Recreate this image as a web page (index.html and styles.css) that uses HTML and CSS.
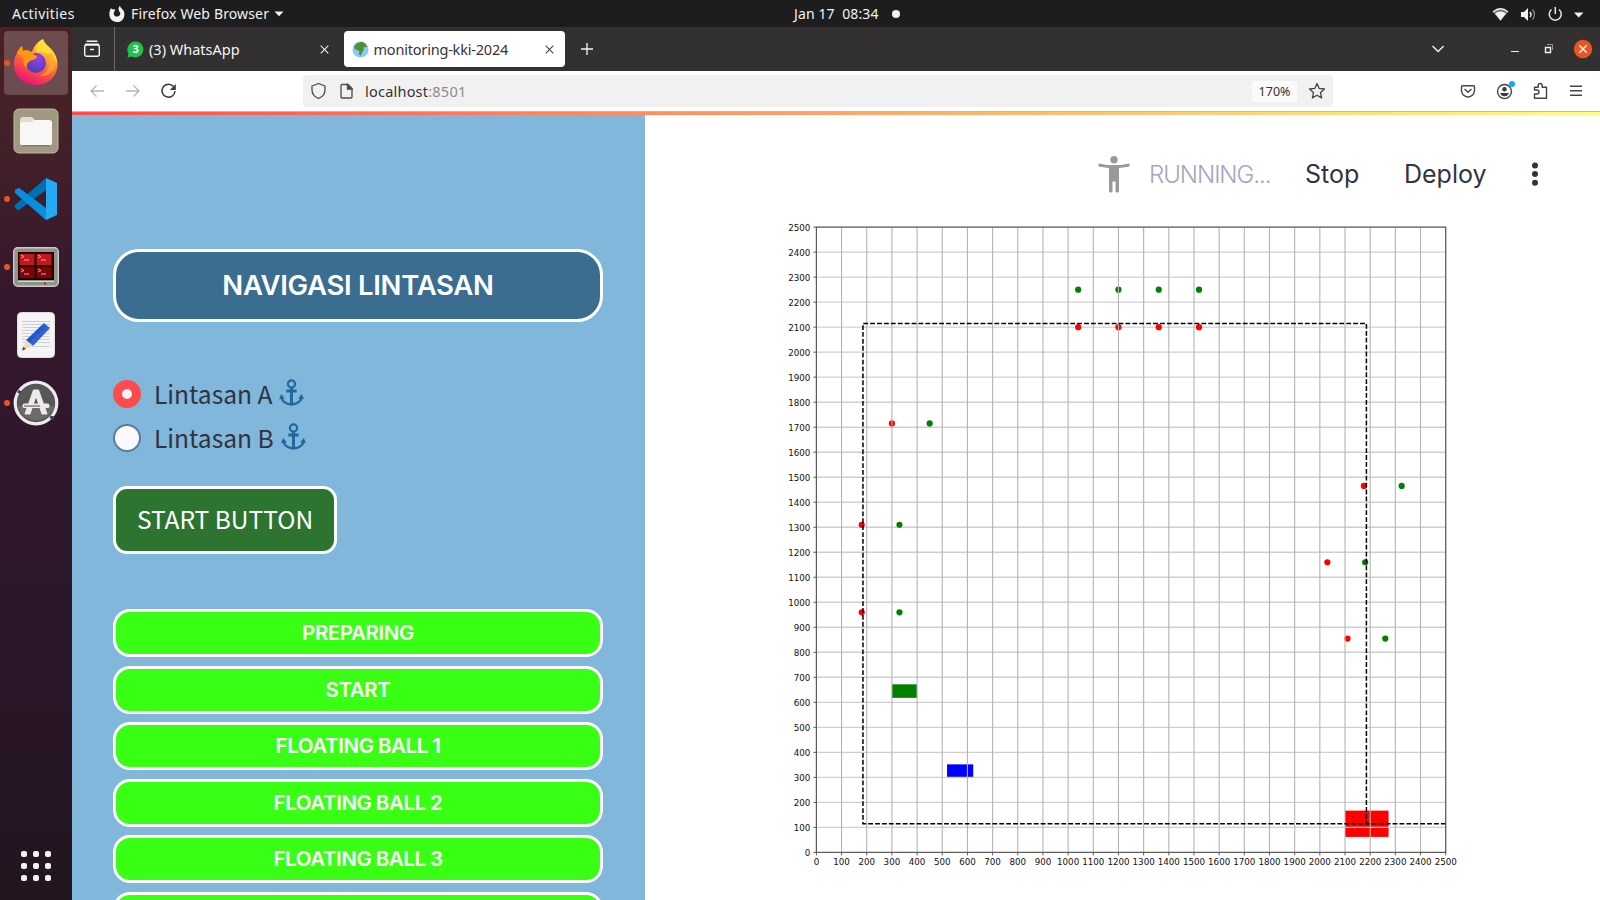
FILE: index.html
```html
<!DOCTYPE html>
<html lang="en">
<head>
<meta charset="utf-8">
<title>monitoring-kki-2024</title>
<link rel="stylesheet" href="styles.css">
</head>
<body>
<header class="topbar">
  <span class="activities">Activities</span>
  <svg class="top-fox" width="18" height="18" viewBox="0 0 18 18"><path d="M3 3.2 5 4.6 7.2 4.2 6.6 6.2C5.6 7.2 5.4 9 6.4 10.4 7.8 12 10.4 12 11.7 10.3 12.7 8.8 12.3 7.4 11.2 6.2 10 4.6 10.4 2.2 12 .8 12.2 2.8 14.2 3.6 15.4 5.6 17.6 9.4 16.2 14.6 12.4 16.4 8.6 18 4 16.6 2.2 13 .8 10 1.2 6 3 3.2Z" fill="#f2f2f2"/></svg>
  <span class="appname">Firefox Web Browser</span>
  <svg class="top-caret" width="10" height="6" viewBox="0 0 10 6"><path d="M.5.5h9L5 5.2z" fill="#f2f2f2"/></svg>
  <span class="clock">Jan 17&nbsp; 08:34</span>
  <span class="clock-dot"></span>
  <svg class="status" width="100" height="20" viewBox="0 0 100 20" fill="none">
    <path d="M1 8Q8.500 1.500 16 8L8.500 17Z" fill="#777"/><path d="M1 8Q8.500 1.500 16 8" stroke="#f2f2f2" stroke-width="1.300"/><path d="M3 9.500Q8.500 5.500 14 9.500L8.500 16.500Z" fill="#f2f2f2"/>
    <path d="M29 8h3l4-4v13l-4-4h-3z" fill="#f2f2f2"/><path d="M38 8q2 2.500 0 5" stroke="#f2f2f2" stroke-width="1.400"/><path d="M40.500 5.500q4 5 0 10" stroke="#888" stroke-width="1.300"/>
    <path d="M59.500 5.500a6 6 0 1 0 7.500 0M63.300 3v7" stroke="#e8e8e8" stroke-width="1.500"/>
    <path d="M82 8.500h9.500l-4.800 5z" fill="#f2f2f2"/>
  </svg>
</header>
<div class="desktop">
  <nav class="dock">
    <div class="app active running">
      <svg width="46" height="48" viewBox="0 0 46 48">
        <defs>
          <linearGradient id="ff" x1=".8" y1="0" x2=".35" y2="1"><stop offset="0" stop-color="#fff44f"/><stop offset=".3" stop-color="#ffb52b"/><stop offset=".62" stop-color="#ff5a3c"/><stop offset="1" stop-color="#e8127a"/></linearGradient>
          <radialGradient id="fp" cx=".6" cy=".3" r=".7"><stop offset="0" stop-color="#9a3fe8"/><stop offset="1" stop-color="#4b3fb8"/></radialGradient>
        </defs>
        <path d="M30 1c1 4 4 6 8 10 3 3 5 7 6 11 3 13-7 25-21 25C10 47 1 38 1 26c0-6 2-9 3-11 1-3 3-5 5-7l1 5c4-1 7 0 9 1 2-6 6-11 11-13Z" fill="url(#ff)"/>
        <path d="M30 1c1 4 4 6 8 10 4 4 6 9 6 14-3-6-7-8-12-10-4-1-6-1-9-1 1-6 4-11 7-13Z" fill="#ffe23f" opacity=".75"/>
        <circle cx="23" cy="25" r="10" fill="url(#fp)"/>
        <path d="M4 15c1-3 3-5 5-7l1 5c5-2 9 1 11 4 2 0 3 1 3 2-1 3-7 3-8 5-2 1-3 4-2 6-4-2-4-7-3-9-2-3-5-5-7-6Z" fill="#ff980e"/>
        <path d="M33 16c6 7 4 17-6 22 12 1 19-10 12-23Z" fill="#ffad2c" opacity=".7"/>
      </svg>
    </div>
    <div class="app">
      <svg width="46" height="46" viewBox="0 0 46 46"><rect x="1" y="1" width="44" height="44" rx="5" fill="#a19882" stroke="#c0b9a6"/><path d="M7 12q0-3 3-3h9l3 3h13q4 0 4 4v8H7z" fill="#e0dccf"/><path d="M7 17q0-3 3-3h8l3-2h15q3 0 3 3v19.500q0 3-3 3H10q-3 0-3-3z" fill="#f8f7f5"/><path d="M9 37.700h28" stroke="#6e6657" stroke-width="1"/></svg>
    </div>
    <div class="app running">
      <svg width="44" height="44" viewBox="0 0 44 44"><path d="M1 28 32 1v12L5 33q-2 0-4-2z" fill="#0070b4"/><path d="M1 16v-3l4-2 27 20v12z" fill="#0389d8"/><path d="M1 15q0-3 4-4l29 22-2 10z" fill="#078fdc"/><path d="M32 1 43 6v32l-11 5z" fill="#25a9f3"/></svg>
    </div>
    <div class="app running">
      <svg width="46" height="40" viewBox="0 0 46 40"><rect x=".7" y=".7" width="44.600" height="38.600" rx="4" fill="#8f938b" stroke="#c9ccc5" stroke-width="1.400"/><rect x="5" y="5" width="36" height="28" fill="#250000"/><path d="M6.500 7h15v11h-15zM23.500 7h15v11h-15z" fill="#c2181c"/><path d="M6.500 20h15v11h-15zM23.500 20h15v11h-15z" fill="#7d0407"/><path d="m8 8 3 1.500L8 11m3 2h5M25 8l3 1.500L25 11m3 2h5M8 22l3 1.500L8 25m3 2h5m9-5 3 1.500-3 1.500m3 2h5" stroke="#e9b5b5" stroke-width=".9" fill="none"/><path d="M31 36.500h2" stroke="#e11" stroke-width="2"/><path d="M5 34.500h36" stroke="#d5d7d1"/></svg>
    </div>
    <div class="app">
      <svg width="38" height="46" viewBox="0 0 38 46"><rect x=".5" y=".5" width="37" height="45" rx="4" fill="#f4f4f4" stroke="#ddd"/><path d="M5 9.500h28M5 12.500h28M5 15.500h28M5 18.500h28M5 21.500h28M5 24.500h28M5 27.500h28M5 30.500h28M5 34.500h28" stroke="#cfcfcf"/><path d="m27 11 6 5-17 18-7-6z" fill="#2f63d8"/><path d="m24.500 13.500 3 2.600-17 16.500-1-4z" fill="#1f49b0" opacity=".5"/><path d="m9 28 7 6-10 4z" fill="#f3d9b5"/><path d="m6.500 35 2.300 2L5 38.500z" fill="#333"/></svg>
    </div>
    <div class="app running">
      <svg width="46" height="46" viewBox="0 0 46 46"><circle cx="23" cy="23" r="20.800" fill="#585858" stroke="#ececec" stroke-width="3.200"/><path d="M5 26h36a18.500 18.500 0 0 1-36 0z" fill="#6b6b6b"/><path d="m5 11 3 2M37 37l4 1" stroke="#444" stroke-width="3"/><path d="M20.500 10h5l8.500 24h-5l-6-18-6 18h-5z" fill="#ececec" stroke="#ececec" stroke-linejoin="round"/><rect x="9.500" y="23.500" width="27" height="4.600" rx="2.200" fill="#ececec"/><path d="M11 26h16" stroke="#7c2b69"/></svg>
    </div>
    <div class="launcher"><i></i><i></i><i></i><i></i><i></i><i></i><i></i><i></i><i></i></div>
  </nav>
  <div class="window">
    <div class="tabs">
      <div class="view-btn"><svg width="18" height="18" viewBox="0 0 18 18" fill="none" stroke="#f5f5f5" stroke-width="1.400"><path d="M4 1.300h10M2.500 4.200h13" stroke-linecap="round"/><rect x="1.700" y="5" width="14.600" height="11.300" rx="2"/><path d="M7 9.500h4"/></svg></div>
      <div class="tab">
        <svg width="17" height="17" viewBox="0 0 17 17"><path d="M8.500.5a8 8 0 1 1-4 15L.5 16.500l1-4A8 8 0 0 1 8.500.5z" fill="#22c04c"/><text x="8.600" y="12.400" text-anchor="middle" class="badge-num">3</text></svg>
        <span class="tab-title t1">(3) WhatsApp</span>
        <svg class="x" width="9" height="9" viewBox="0 0 9 9"><path d="m.7.700 7.600 7.600m0-7.600L.7 8.300" stroke="#eee" stroke-width="1.100"/></svg>
      </div>
      <div class="tab current">
        <svg width="17" height="17" viewBox="0 0 17 17"><circle cx="8.500" cy="8.500" r="8" fill="#8dc9f3"/><path d="M3 4q3-3 7-3.200l3 1.700 2 3-1.500 1-2-.5.500 2.500-2 3-1.500 3.500L7 13l.3-3L4 8.500 2 7z" fill="#4f9033"/></svg>
        <span class="tab-title t2">monitoring-kki-2024</span>
        <svg class="x" width="9" height="9" viewBox="0 0 9 9"><path d="m.7.700 7.600 7.600m0-7.600L.7 8.300" stroke="#444" stroke-width="1.100"/></svg>
      </div>
      <svg class="plus" width="12" height="12" viewBox="0 0 12 12"><path d="M6 0v12M0 6h12" stroke="#f5f5f5" stroke-width="1.300"/></svg>
      <svg class="win-ctl" width="180" height="20" viewBox="0 0 180 20" fill="none" stroke="#f0f0f0"><path d="m12.500 7 5.600 5.500L23.700 7" stroke-width="1.400"/><path d="M91 12.500h8"/><path d="M125.500 8.500h5v5h-5z" stroke-width="1.400"/><path d="M127 5.500h5.500V11" stroke="#999"/><circle cx="163" cy="10" r="9.200" fill="#e95420" stroke="none"/><path d="m159.300 6.300 7.400 7.400m0-7.400-7.400 7.400" stroke-width="1.500"/></svg>
    </div>
    <div class="toolbar">
      <svg class="nav-icons" width="90" height="20" viewBox="0 0 90 20" fill="none" stroke="#b5b5b5" stroke-width="1.300"><path d="M15 10H2m5.500-5.500L2 10l5.500 5.500M37 10h13m-5.500-5.500L50 10l-5.500 5.500"/><path d="M84.500 5.500A6.500 6.500 0 1 0 86 10" stroke="#3a3a3a" stroke-width="1.500"/><path d="M86.800 3v6h-6z" fill="#3a3a3a" stroke="none"/></svg>
      <div class="urlbar">
        <svg width="42" height="18" viewBox="0 0 42 18" fill="none" stroke="#4a4a4a" stroke-width="1.300"><path d="M7.500 1.500 14 4v4c0 4-3 7-6.500 8.500C4 15 1 12 1 8V4z" stroke-linejoin="round"/><path d="M31 2.500h6l4 4V15a1 1 0 0 1-1 1h-9a1 1 0 0 1-1-1V3.500a1 1 0 0 1 1-1z"/><path d="M36.500 2.500v4.500H41z" fill="#4a4a4a"/></svg>
        <span class="url">localhost<em>:8501</em></span>
        <span class="zoom">170%</span>
        <svg width="18" height="18" viewBox="0 0 18 18" fill="none" stroke="#444" stroke-width="1.300" stroke-linejoin="round"><path d="m9 1.500 2.200 4.900 5.300.6-4 3.600 1.100 5.300L9 13.300l-4.600 2.600 1.100-5.300-4-3.600 5.300-.6z"/></svg>
      </div>
      <svg class="tools" width="124" height="22" viewBox="0 0 124 22" fill="none" stroke="#444" stroke-width="1.400"><path d="M2.500 5.800h11q1 0 1 1v3.700a6.500 6.500 0 0 1-13 0V6.800q0-1 1-1z"/><path d="m4.500 9 3.500 3.300L11.500 9" /><circle cx="44.500" cy="11.500" r="7"/><circle cx="44.500" cy="9.300" r="2.200" fill="#3a3a3a" stroke="none"/><path d="M40.200 13h8.600q-.8 3.300-4.300 3.300T40.200 13z" fill="#3a3a3a" stroke="none"/><circle cx="52" cy="4" r="3" fill="#00b3f4" stroke="none"/><path d="M74.500 18.300V14h2.500a2 2 0 0 0 0-4h-2.500V7.300h3.700V5.500a2 2 0 0 1 4 0v1.800h4.300v11z" stroke-linejoin="round"/><path d="M110 6.300h12M110 10.800h12M110 15.300h12"/></svg>
    </div>
    <div class="accent"></div>
    <div class="page">
      <aside class="sidebar">
        <h1 class="nav-title"><span>NAVIGASI LINTASAN</span></h1>
        <div class="radios">
          <label class="radio"><i class="dot on"></i><span class="ra">Lintasan A</span><svg width="25" height="28" viewBox="0 0 25 28"><use href="#anchor"/></svg></label>
          <label class="radio"><i class="dot"></i><span class="rb">Lintasan B</span><svg width="25" height="28" viewBox="0 0 25 28"><g id="anchor" fill="none" stroke="#22679f"><circle cx="12.500" cy="5" r="3.600" stroke-width="2.200"/><path d="M12.500 8.500v18M7.300 12h10.400" stroke-width="3"/><path d="M2.500 18.500c1.500 9 18.500 9 20 0" stroke-width="2.400"/><path d="m2.200 15 3.600 4.500L0 20.300zM22.800 15l2.200 5.300-5.800-.8z" fill="#22679f" stroke="none"/></g></svg></label>
        </div>
        <button class="start"><span>START BUTTON</span></button>
        <div class="steps">
          <div class="step"><span>PREPARING</span></div>
          <div class="step"><span>START</span></div>
          <div class="step"><span>FLOATING BALL 1</span></div>
          <div class="step"><span>FLOATING BALL 2</span></div>
          <div class="step"><span>FLOATING BALL 3</span></div>
          <div class="step"></div>
        </div>
      </aside>
      <main class="content">
        <div class="app-head">
          <svg class="man" width="32" height="37" viewBox="0 0 32 37" fill="#999"><circle cx="16" cy="3.700" r="3.700"/><path d="M1 7.500q-1.500 1.800.5 3.200L11 12v23.500q0 1 1.700 1t1.800-1V25.500h3V35.500q0 1 1.800 1t1.700-1V12l9.500-1.300q2-1.400.5-3.200L23 9H9z"/></svg>
          <span class="running-txt">RUNNING...</span>
          <span class="stop">Stop</span>
          <span class="deploy">Deploy</span>
          <svg class="dots" width="8" height="24" viewBox="0 0 8 24" fill="#31333f"><circle cx="4" cy="3.500" r="3"/><circle cx="4" cy="12" r="3"/><circle cx="4" cy="20.700" r="3"/></svg>
        </div>
        <svg id="chart" class="chart" width="955" height="685" viewBox="645 215 955 685"></svg>
      </main>
    </div>
  </div>
</div>
<script src="chart.js"></script>
</body>
</html>
```

FILE: chart.js
```js
const svg = document.getElementById('chart');
const X = v => 816.4 + v * 629.3 / 2500;
const Y = v => 852.4 - v * 625.3 / 2500;
function add(tag, attrs, text) {
  const el = document.createElementNS('http://www.w3.org/2000/svg', tag);
  for (const k in attrs) el.setAttribute(k, attrs[k]);
  if (text !== undefined) el.textContent = text;
  svg.appendChild(el);
}
function rect(x0, y0, x1, y1, fill) {
  add('rect', { x: X(x0), y: Y(y1), width: X(x1) - X(x0), height: Y(y0) - Y(y1), fill });
}
rect(300, 618, 400, 672, '#008000');
rect(519, 300, 623, 352, '#0000ff');
rect(2100, 62, 2273, 167, '#ff0000');

for (let v = 0; v <= 2500; v += 100) {
  add('line', { x1: X(0), x2: X(2500), y1: Y(v), y2: Y(v), class: 'grid row' });
}

const red = [[1040, 2100], [1200, 2100], [1360, 2100], [1520, 2100], [300, 1715], [180, 1310], [180, 960], [2175, 1465], [2030, 1160], [2110, 855]];
const green = [[1040, 2250], [1200, 2250], [1360, 2250], [1520, 2250], [450, 1715], [330, 1310], [330, 960], [2325, 1465], [2180, 1160], [2260, 855]];
red.forEach(([x, y]) => add('circle', { cx: X(x), cy: Y(y), r: 3.1, fill: '#ff0000' }));
green.forEach(([x, y]) => add('circle', { cx: X(x), cy: Y(y), r: 3.1, fill: '#008000' }));

for (let v = 0; v <= 2500; v += 100) {
  add('line', { x1: X(v), x2: X(v), y1: Y(0), y2: Y(2500), class: 'grid' });
  add('line', { x1: X(v), x2: X(v), y1: Y(0), y2: Y(0) + 3, class: 'tick' });
  add('line', { x1: X(0) - 3, x2: X(0), y1: Y(v), y2: Y(v), class: 'tick' });
  add('text', { x: X(v), y: Y(0) + 13, 'text-anchor': 'middle', class: 'label' }, v);
  add('text', { x: X(0) - 6, y: Y(v) + 3.4, 'text-anchor': 'end', class: 'label' }, v);
}
const track = [[2500, 115], [185, 115], [185, 2115], [2185, 2115], [2185, 115]];
add('polyline', { points: track.map(([x, y]) => X(x) + ',' + Y(y)).join(' '), class: 'track' });
add('rect', { x: X(0), y: Y(2500), width: 629.3, height: 625.3, class: 'frame' });
```

FILE: styles.css
```css
* { box-sizing: border-box; }
body { margin: 0; width: 1600px; height: 900px; overflow: hidden; display: flex; flex-direction: column; font-family: "Noto Sans", sans-serif; background: #fff; }
svg { display: block; flex: none; }
span { white-space: nowrap; }

.topbar { height: 27px; flex: none; background: #1d1d1d; color: #f2f2f2; font-size: 14px; display: flex; align-items: center; }
.activities { width: 97px; padding-left: 12px; letter-spacing: .45px; }
.top-fox { margin-left: 11px; }
.appname { margin-left: 5px; width: 138px; letter-spacing: .14px; }
.top-caret { margin-left: 5px; }
.clock { margin-left: 510px; width: 87px; letter-spacing: .12px; }
.clock-dot { width: 8px; height: 8px; border-radius: 50%; background: #f2f2f2; margin-left: 11px; }
.status { margin-left: 592px; }

.desktop { flex: 1; min-height: 0; display: flex; }
.dock { width: 72px; flex: none; background: linear-gradient(#4a2023 0, #42202a 130px, #36182d 260px, #30172d 420px, #2b162a 600px, #22151f 873px); display: flex; flex-direction: column; padding: 4px 4px 19px; gap: 4px; }
.app { height: 64px; display: flex; align-items: center; justify-content: center; border-radius: 4px; position: relative; }
.active { background: rgba(255,255,255,.2); }
.active svg { margin-top: -2px; }
.running::before { content: ""; position: absolute; left: 0; top: 29px; width: 6px; height: 6px; border-radius: 50%; background: #e95420; }
.launcher { margin: auto auto 0; display: grid; grid-template-columns: repeat(3, 6px); gap: 6px; }
.launcher i { height: 6px; border-radius: 2px; background: #f2f2f2; }

.window { flex: 1; min-width: 0; display: flex; flex-direction: column; }
.tabs { height: 44px; flex: none; background: #323031; display: flex; align-items: center; }
.view-btn { width: 43px; height: 44px; padding-left: 11px; display: flex; align-items: center; border-right: 1px solid #6a6869; }
.tab { width: 229px; height: 36px; padding: 0 15px 0 12px; display: flex; align-items: center; color: #f5f5f5; font-size: 14.5px; }
.tab-title { margin-left: 5px; }
.t2 { letter-spacing: -.2px; }
.tab .x { margin-left: auto; }
.current { width: 221px; padding: 0 11.500px 0 7.500px; background: #fff; border-radius: 4px; color: #35343a; }
.badge-num { font: bold 11px "Noto Sans", sans-serif; fill: #fff; }
.plus { margin-left: 15.500px; }
.win-ctl { margin-left: auto; margin-right: 0; }

.toolbar { height: 40px; flex: none; background: #fff; display: flex; align-items: center; }
.nav-icons { margin-left: 16.500px; }
.urlbar { margin-left: 124.500px; width: 1030px; height: 32px; background: #f1f1f1; border-radius: 4px; display: flex; align-items: center; padding: 0 7px 0 8px; }
.url { margin-left: 12px; font-size: 14.500px; letter-spacing: .22px; color: #333; }
.url em { font-style: normal; color: #8c8c8c; }
.zoom { margin-left: auto; margin-right: 11px; width: 45px; height: 21px; line-height: 21px; text-align: center; background: #fbfbfb; border-radius: 3px; font-size: 12.500px; color: #333; }
.tools { margin-left: 127px; }
.accent { height: 4px; flex: none; border-top: 1px solid #bbb; background: linear-gradient(90deg, #ff4b4b, #fffd80); }

.page { flex: 1; min-height: 0; display: flex; overflow: hidden; }
.sidebar { width: 573px; flex: none; background: #80b7db; padding: 134px 42px 0 41px; }
.nav-title { margin: 0; height: 73px; border: 3px solid #fff; border-radius: 26px; background: #3a6d8f; color: #fff; font: 600 27.500px Inter, sans-serif; letter-spacing: -.3px; padding-bottom: 1px; display: flex; align-items: center; justify-content: center; }
.radios { margin-top: 49.500px; }
.radio { height: 44px; display: flex; align-items: center; font: 24.600px "Noto Sans CJK JP", sans-serif; color: #31333f; }
.radio span { margin: -2px 0 0 13px; width: 125px; }
.radio .rb { width: 126.500px; }
.radio svg { margin-top: -2px; }
.dot { width: 28px; height: 28px; border-radius: 50%; background: #fafafc; border: 2px solid #587f9e; }
.on { border: 9px solid #ff4b4b; background: #f3f3f7; }
.start { display: flex; align-items: center; justify-content: center; margin: 26.500px 0 0; padding: 0 0 3px; width: 224px; height: 68px; border: 3px solid #fff; border-radius: 14px; background: #2c742f; color: #fff; font: 24.500px "Noto Sans CJK JP", sans-serif; }
.steps { margin-top: 55px; display: flex; flex-direction: column; gap: 8.500px; }
.step { height: 48px; flex: none; border: 3px solid #fff; border-radius: 17px; background: #39ff14; color: #fff; font: 600 20.500px Inter, sans-serif; letter-spacing: -.4px; word-spacing: -.5px; padding-bottom: 1px; display: flex; align-items: center; justify-content: center; }

.content { flex: 1; min-width: 0; display: flex; flex-direction: column; background: #fff; }
.app-head { height: 100px; flex: none; padding: 18px 0 0 453px; display: flex; align-items: center; font: 25px Inter, sans-serif; color: #31333f; }
.running-txt { margin-left: 19px; width: 156px; color: #a3a8b8; font-size: 24px; font-weight: 300; letter-spacing: -1.050px; }
.stop { width: 99px; }
.deploy { width: 127px; }
.chart .grid { stroke: #b4b4b4; stroke-width: 1.100; }
.chart .row { stroke: #cfcfcf; stroke-width: 1.400; }
.chart .tick { stroke: #333; stroke-width: .8; }
.chart .label { font: 8.700px "DejaVu Sans", sans-serif; fill: #111; }
.chart .track { fill: none; stroke: #000; stroke-width: 1.500; stroke-dasharray: 4.800 2.100; }
.chart .frame { fill: none; stroke: #555; stroke-width: 1.100; }
```
